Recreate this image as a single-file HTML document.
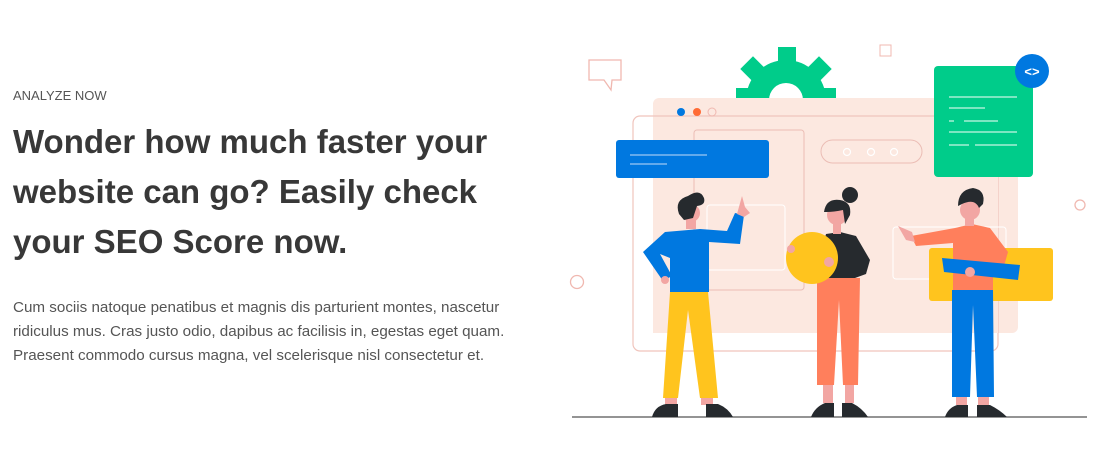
<!DOCTYPE html>
<html><head><meta charset="utf-8"><style>
body{margin:0;width:1107px;height:462px;background:#fff;overflow:hidden;position:relative;font-family:"Liberation Sans",sans-serif;color:#3b3b3b}
.k{position:absolute;left:13px;top:88px;font-size:13px;color:#555;letter-spacing:0}
h1{position:absolute;left:13px;top:117px;margin:0;font-size:33px;line-height:50px;font-weight:bold;color:#383838;width:560px;letter-spacing:0}
p{position:absolute;left:13px;top:296px;margin:0;font-size:15.2px;line-height:24px;color:#555;width:560px;letter-spacing:0}
svg{position:absolute;left:0;top:0}
</style></head><body>
<div class="k">ANALYZE NOW</div>
<h1>Wonder how much faster your<br>website can go? Easily check<br>your SEO Score now.</h1>
<p>Cum sociis natoque penatibus et magnis dis parturient montes, nascetur<br>ridiculus mus. Cras justo odio, dapibus ac facilisis in, egestas eget quam.<br>Praesent commodo cursus magna, vel scelerisque nisl consectetur et.</p>
<svg width="1107" height="462">
<g fill="#00cc8a">
<rect x="778" y="47" width="18" height="20"/>
<rect x="736" y="88" width="100" height="12"/>
<circle cx="786" cy="100" r="40"/>
<rect x="744" y="60" width="18" height="18" transform="rotate(45 753 69)"/>
<rect x="810" y="60" width="18" height="18" transform="rotate(45 819 69)"/>
</g>
<circle cx="786" cy="100" r="17" fill="#fff"/>
<rect x="653" y="98" width="365" height="235" rx="6" fill="#fce8e0"/>
<rect x="633" y="116" width="365" height="235" rx="7" fill="none" stroke="#f0c4bc" stroke-width="1.2"/>
<rect x="653" y="117" width="345" height="216" fill="#fce8e0"/>
<rect x="694" y="130" width="110" height="160" rx="3" fill="none" stroke="#ebbdb5"/>
<rect x="707" y="205" width="78" height="65" rx="3" fill="none" stroke="#fff"/>
<rect x="893" y="227" width="113" height="52" rx="3" fill="none" stroke="#fff"/>
<circle cx="681" cy="112" r="4" fill="#0078e0"/><circle cx="697" cy="112" r="4" fill="#ff6b35"/><circle cx="712" cy="112" r="4" fill="none" stroke="#f0b8b0"/>
<rect x="821" y="140" width="101" height="23" rx="11.5" fill="none" stroke="#ebbdb5"/>
<g fill="none" stroke="#fff" stroke-width="1.2"><circle cx="847" cy="152" r="3.5"/><circle cx="871" cy="152" r="3.5"/><circle cx="894" cy="152" r="3.5"/></g>
<rect x="616" y="140" width="153" height="38" rx="3" fill="#0078e0"/>
<path d="M630 155H707M630 164H667" stroke="#9cc8f2" stroke-width="1.3"/>
<rect x="934" y="66" width="99" height="111" rx="4" fill="#00cc8a"/>
<path d="M949 97H1017M949 108H985M949 121H954M964 121H998M949 132H1017M949 145H969M975 145H1017" stroke="#c8f5e4" stroke-width="1.2"/>
<circle cx="1032" cy="71" r="17" fill="#0078e0"/>
<text x="1032" y="76" font-size="13" font-weight="bold" fill="#fff" text-anchor="middle" font-family="Liberation Sans">&lt;&gt;</text>
<path d="M589 60H621V80H612L611 90L604 80H589Z" fill="none" stroke="#f0b8b0" stroke-width="1.3"/>
<rect x="880" y="45" width="11" height="11" fill="none" stroke="#f0b8b0"/>
<circle cx="1080" cy="205" r="5" fill="none" stroke="#f0b8b0" stroke-width="1.3"/>
<circle cx="577" cy="282" r="6.5" fill="none" stroke="#f0b8b0" stroke-width="1.3"/>
<rect x="929" y="248" width="124" height="53" rx="3" fill="#ffc41e"/>
<line x1="572" y1="417" x2="1087" y2="417" stroke="#555" stroke-width="1.2"/>
<path d="M670 292L663 398H678L688 310L700 398H718L708 292Z" fill="#ffc41e"/>
<path d="M665 398H677V405H665ZM701 398H713V405H701Z" fill="#f2a6a3"/>
<path d="M652 417Q655 406 666 404H678V417ZM706 404H718Q728 408 733 417H706Z" fill="#262a2e"/>
<path d="M665 232L700 229L727 231L735 213L744 215L740 244L709 242L709 292H670V258L660 254L672 276L663 281L643 252Z" fill="#0078e0"/>
<path d="M737 214L742 196L745 207L750 213L744 217Z" fill="#f2a6a3"/>
<circle cx="691" cy="213" r="9" fill="#f2a6a3"/><rect x="686" y="217" width="10" height="12" fill="#f2a6a3"/>
<path d="M679 214Q674 200 688 196Q700 188 704 198Q706 205 697 206L693 218L684 220Z" fill="#262a2e"/>
<circle cx="665" cy="280" r="4" fill="#f2a6a3"/>
<path d="M817 278H860L858 385H843L839 300L834 385H817Z" fill="#ff7f5c"/>
<path d="M823 385H833V403H823ZM845 385H854V403H845Z" fill="#f2a6a3"/>
<path d="M811 417Q815 407 825 403H834V417ZM842 403H852Q862 408 868 417H842Z" fill="#262a2e"/>
<path d="M826 234L840 232L856 236L870 260L866 274L855 278H822L822 250Z" fill="#262a2e"/>
<circle cx="837" cy="215" r="10" fill="#f2a6a3"/><rect x="833" y="222" width="8" height="12" fill="#f2a6a3"/>
<circle cx="850" cy="195" r="8" fill="#262a2e"/>
<path d="M824 212Q826 198 840 200Q852 202 850 215L845 224L843 210Q834 212 826 212Z" fill="#262a2e"/>
<circle cx="812" cy="258" r="26" fill="#ffc41e"/>
<circle cx="791" cy="249" r="4" fill="#f2a6a3"/><circle cx="829" cy="262" r="5" fill="#f2a6a3"/>
<path d="M952 290H993L994 397H977L973 305L970 397H952Z" fill="#0078e0"/>
<path d="M956 397H967V405H956ZM978 397H989V405H978Z" fill="#f2a6a3"/>
<path d="M945 417Q948 408 957 405H968V417ZM977 405H990Q1000 410 1007 417H977Z" fill="#262a2e"/>
<path d="M955 228L972 224L990 228L1008 252L1004 266L993 272L993 290H953L953 243L916 246L911 236Z" fill="#ff7f5c"/>
<path d="M898 226L912 232L915 242L906 240Z" fill="#f2a6a3"/>
<circle cx="970" cy="210" r="10" fill="#f2a6a3"/><rect x="965" y="216" width="9" height="10" fill="#f2a6a3"/>
<path d="M958 206Q958 190 973 188Q986 190 983 204L979 208Q975 198 962 204Z" fill="#262a2e"/>
<path d="M942 258L1020 265L1018 280L944 272Z" fill="#0078e0"/>
<circle cx="970" cy="272" r="5" fill="#f2a6a3"/>
</svg>
</body></html>
